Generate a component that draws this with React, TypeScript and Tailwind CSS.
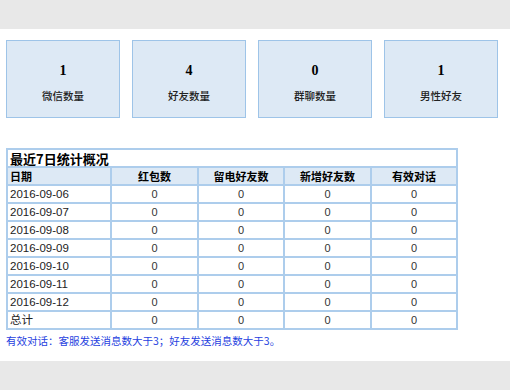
import React from "react";

const cards = [
  { n: "1", label: "微信数量" },
  { n: "4", label: "好友数量" },
  { n: "0", label: "群聊数量" },
  { n: "1", label: "男性好友" },
];

const dates = [
  "2016-09-06",
  "2016-09-07",
  "2016-09-08",
  "2016-09-09",
  "2016-09-10",
  "2016-09-11",
  "2016-09-12",
  "总计",
];

const cjk = { fontFamily: '"Noto Sans CJK SC", "Liberation Sans", sans-serif' };

export default function App() {
  return (
    <div className="w-[510px] h-[390px] flex flex-col bg-white text-[#222]" style={cjk}>
      <div className="h-[29px] bg-[#e8e8e8] shrink-0" />
      <div className="flex-1 pl-[6px] pt-[11px]">
        <div className="flex gap-[12px]">
          {cards.map((c) => (
            <div
              key={c.label}
              className="w-[114px] h-[78px] border border-[#9ec4e8] bg-[#dde9f5] flex flex-col items-center"
            >
              <div
                className="mt-[21px] text-[14px] font-bold leading-[18px] text-black"
                style={{ fontFamily: '"Liberation Serif", serif' }}
              >
                {c.n}
              </div>
              <div className="mt-[9px] text-[10.5px] font-medium leading-[14px] text-[#222]">{c.label}</div>
            </div>
          ))}
        </div>
        <table className="mt-[30px] w-[450px] border-collapse text-[11px] table-fixed">
          <colgroup>
            <col className="w-[104px]" />
            <col className="w-[87px]" />
            <col className="w-[86px]" />
            <col className="w-[87px]" />
            <col className="w-[86px]" />
          </colgroup>
          <tbody>
            <tr>
              <td
                colSpan={5}
                className="h-[18px] p-0 pl-[2px] border-2 border-[#adcdec] text-[13px] font-bold leading-[15px] text-black"
              >
                最近7日统计概况
              </td>
            </tr>
            <tr className="bg-[#dde9f5]">
              <td className="h-[18px] p-0 pl-[2px] border-2 border-[#adcdec] font-bold leading-[14px] text-black">日期</td>
              {["红包数", "留电好友数", "新增好友数", "有效对话"].map((h) => (
                <td
                  key={h}
                  className="h-[18px] p-0 border-2 border-[#adcdec] font-bold text-center leading-[14px] text-black"
                >
                  {h}
                </td>
              ))}
            </tr>
            {dates.map((d) => (
              <tr key={d}>
                <td
                  className="h-[18px] p-0 pl-[2px] border-2 border-[#adcdec] leading-[14px] text-[11.5px] text-[#222]"
                  style={{ fontFamily: '"Liberation Sans", "Noto Sans CJK SC", sans-serif' }}
                >
                  {d}
                </td>
                {[0, 1, 2, 3].map((i) => (
                  <td
                    key={i}
                    className="h-[18px] p-0 border-2 border-[#adcdec] text-center leading-[14px] text-[#333]"
                    style={{ fontFamily: '"Liberation Sans", sans-serif' }}
                  >
                    0
                  </td>
                ))}
              </tr>
            ))}
          </tbody>
        </table>
        <div className="mt-[4px] text-[10.5px] leading-[14px] text-[#1f3fe0]">
          有效对话：客服发送消息数大于3；好友发送消息数大于3。
        </div>
      </div>
      <div className="h-[29px] bg-[#e8e8e8] shrink-0" />
    </div>
  );
}
